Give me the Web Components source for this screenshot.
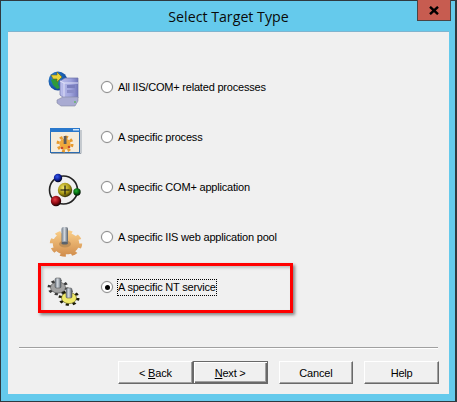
<!doctype html>
<html><head><meta charset="utf-8">
<style>
html,body{margin:0;padding:0;background:#65caec}
body{width:457px;height:402px;overflow:hidden;font-family:"Liberation Sans",Arial,sans-serif;font-size:11px;color:#000}
</style></head><body>
<x-window heading="Select Target Type">
  <x-option label="All IIS/COM+ related processes">
    <svg slot="icon" width="40" height="40" viewBox="0 0 40 40">
      <defs>
        <radialGradient id="g1" cx=".35" cy=".35" r=".8"><stop offset="0" stop-color="#2f8fe0"/><stop offset="1" stop-color="#0a3586"/></radialGradient>
        <linearGradient id="s1" x1="0" x2="1" y1="0" y2="0"><stop offset="0" stop-color="#bcbfec"/><stop offset=".6" stop-color="#9ea2dc"/><stop offset="1" stop-color="#7478bc"/></linearGradient>
      </defs>
      <circle cx="12" cy="14" r="9.5" fill="url(#g1)"/>
      <path d="M5 13l5-2 3 2-1 4 2 4-3 1-4-4z" fill="#2f9a3a"/>
      <path d="M5 8h6V5l5 5-5 5v-3H7z" fill="#e9d43a" stroke="#6e6314" stroke-width=".6"/>
      <path d="M14 14l5-3h13v20H18l-4-3z" fill="url(#s1)" stroke="#6f73aa" stroke-width=".7"/>
      <path d="M14 14l4 2h14" fill="none" stroke="#e4e5fb"/>
      <path d="M18 16v15" stroke="#e0e1f8"/>
      <rect x="21" y="18" width="8" height="3" fill="#7b7fbd"/><rect x="21" y="23" width="8" height="3" fill="#8a8dc8"/>
      <path d="M11 33l6-3h15v4l-3 5H15l-4-3z" fill="#a9abd2" stroke="#8487a3" stroke-width=".6"/>
      <circle cx="29" cy="35" r=".9" fill="#5cb85c"/>
    </svg>
  </x-option>
  <x-option label="A specific process">
    <svg slot="icon" width="40" height="40" viewBox="0 0 40 40">
      <rect x="4.5" y="11.5" width="29" height="24" fill="#f5ecdc" stroke="#2d6cb0"/>
      <rect x="4" y="11" width="30" height="4" fill="#2a78cc"/>
      <rect x="27" y="12" width="6" height="1.5" fill="#cfe4f7"/>
      <path d="M5 36.5h30V13" fill="none" stroke="#9aa3ad"/>
      <circle cx="19" cy="27" r="7" fill="none" stroke="#e89a2d" stroke-width="3" stroke-dasharray="2.8 2.7"/>
      <circle cx="19" cy="27" r="5.5" fill="#f0a93b"/>
      <circle cx="16" cy="31" r="1.3" fill="#c9472b"/><circle cx="23" cy="30" r="1.3" fill="#c9472b"/>
      <rect x="17.7" y="19" width="2.8" height="8" fill="#5d5d5d"/>
    </svg>
  </x-option>
  <x-option label="A specific COM+ application">
    <svg slot="icon" width="40" height="40" viewBox="0 0 40 40">
      <defs>
        <radialGradient id="by" cx=".4" cy=".35" r=".7"><stop offset="0" stop-color="#f4e96a"/><stop offset=".6" stop-color="#a3920f"/><stop offset="1" stop-color="#1c1903"/></radialGradient>
        <radialGradient id="bb" cx=".4" cy=".35" r=".7"><stop offset="0" stop-color="#3358f0"/><stop offset=".55" stop-color="#0f1f94"/><stop offset="1" stop-color="#000"/></radialGradient>
        <radialGradient id="br" cx=".4" cy=".35" r=".7"><stop offset="0" stop-color="#e83a44"/><stop offset=".55" stop-color="#8f0a12"/><stop offset="1" stop-color="#000"/></radialGradient>
        <radialGradient id="bg" cx=".4" cy=".35" r=".7"><stop offset="0" stop-color="#25b533"/><stop offset=".5" stop-color="#066a12"/><stop offset="1" stop-color="#000"/></radialGradient>
      </defs>
      <circle cx="17.5" cy="23" r="14" fill="none" stroke="#222" stroke-width="1.6"/>
      <circle cx="12" cy="11" r="4.2" fill="url(#bb)"/>
      <circle cx="10" cy="34" r="5.2" fill="url(#br)"/>
      <circle cx="31" cy="25" r="3.7" fill="url(#bg)"/>
      <circle cx="19" cy="23" r="7.2" fill="url(#by)"/>
      <path d="M19 18.5v9M14.5 23h9" stroke="#111" stroke-width="1.2"/>
    </svg>
  </x-option>
  <x-option label="A specific IIS web application pool">
    <svg slot="icon" width="40" height="40" viewBox="0 0 40 40">
      <defs><linearGradient id="cy" x1="0" x2="1" y1="0" y2="0"><stop offset="0" stop-color="#6f7a86"/><stop offset=".45" stop-color="#d3d8de"/><stop offset="1" stop-color="#59626c"/></linearGradient>
      <linearGradient id="go" gradientUnits="userSpaceOnUse" x1="0" x2="0" y1="-16" y2="16"><stop offset="0" stop-color="#fbd08a"/><stop offset="1" stop-color="#d08c4c"/></linearGradient></defs>
      <g transform="translate(20 26.5) scale(1 .82)">
        <circle r="14" fill="none" stroke="url(#go)" stroke-width="4.4" stroke-dasharray="5.5 5.5"/>
        <circle r="13.2" fill="url(#go)"/>
      </g>
      <ellipse cx="19" cy="27" rx="6" ry="3.5" fill="#c09058"/>
      <rect x="15.5" y="10" width="6.5" height="16" rx="2" fill="url(#cy)"/>
      <ellipse cx="18.7" cy="26" rx="3.3" ry="1.6" fill="#59626c"/>
    </svg>
  </x-option>
  <x-option label="A specific NT service" checked>
    <svg slot="icon" width="40" height="40" viewBox="0 0 40 40">
      <g transform="translate(12 20.5) scale(1 .75)">
        <circle r="8.5" fill="none" stroke="#3a3a3a" stroke-width="4" stroke-dasharray="3 3.67"/>
        <circle r="7.5" fill="#a2a2a2" stroke="#4a4a4a" stroke-width=".7"/>
      </g>
      <rect x="9" y="11" width="6" height="10" rx="1.5" fill="url(#cy)" stroke="#444" stroke-width=".5"/>
      <g transform="translate(23 31) scale(1 .75)">
        <circle r="8.5" fill="none" stroke="#1a1a08" stroke-width="4" stroke-dasharray="3 3.67"/>
        <circle r="7.5" fill="#efe96a" stroke="#5a5614" stroke-width=".7"/>
      </g>
      <rect x="20" y="21" width="6" height="10" rx="1.5" fill="url(#cy)" stroke="#444" stroke-width=".5"/>
    </svg>
  </x-option>
</x-window>
<script>
function def(name, html, init){
  const t=document.createElement('template'); t.innerHTML=html;
  customElements.define(name, class extends HTMLElement{
    constructor(){super(); this.attachShadow({mode:'open'}).appendChild(t.content.cloneNode(true));}
    connectedCallback(){ if(init) init(this, this.shadowRoot); }
  });
}
def('x-button',`<style>
:host{display:block;width:75px;height:23px;box-sizing:border-box;background:#f0f0f0;
border:1px solid;border-color:#fff #696969 #696969 #fff;box-shadow:inset -1px -1px 0 #a0a0a0;
font:11px "Liberation Sans",Arial,sans-serif;letter-spacing:-.2px;color:#000}
:host([default]){border:1px solid #696969;box-shadow:inset 1px 1px 0 #fff,inset -1px -1px 0 #696969,inset -2px -2px 0 #a0a0a0}
div{display:flex;height:100%;align-items:center;justify-content:center;white-space:pre}
</style><div><slot></slot></div>`);
def('x-titlebar',`<style>
:host{display:flex;align-items:center;justify-content:center;height:30px;box-sizing:border-box;position:relative;
font:14.2px "Open Sans","Noto Sans",sans-serif;color:#0a0a0a}
span.close{position:absolute;top:-1px;right:-2px;width:34px;height:21px;box-sizing:border-box;background:#c75c50;border:1px solid #4a4444;border-top:none;
display:flex;align-items:center;justify-content:center}
</style><slot></slot><span class="close"><svg width="10" height="9" viewBox="0 0 10 9"><path d="M1 .8l8 7.4M9 .8L1 8.2" stroke="#000" stroke-width="2.4"/></svg></span>`);
def('x-option',`<style>
:host{display:flex;align-items:center;height:50px;padding-left:38px;letter-spacing:-.2px}
.ic{width:40px;height:40px;margin-right:15px;flex:none}
.r{width:12px;height:12px;box-sizing:border-box;border-radius:50%;background:#fff;border:1px solid #8a8a8a;box-shadow:0 0 0 .5px #dcdcdc;flex:none;margin-right:4px;display:flex;align-items:center;justify-content:center}
.r i{display:none;width:5px;height:5px;border-radius:50%;background:#000}
.l{border:1px solid transparent;padding:1px 0;line-height:13px;white-space:nowrap}
:host([checked]) .r i{display:block}
:host([checked]) .l{border:1px dotted #000}
</style><div class="ic"><slot name="icon"></slot></div><span class="r"><i></i></span><span class="l"></span>`,
(el,s)=>{s.querySelector('.l').textContent=el.getAttribute('label');});
def('x-window',`<style>
:host{display:block;width:457px;height:402px;box-sizing:border-box;border:1px solid #2f3a40;border-width:1px 2px 1px 1px;background:#65caec;padding:0 6px 7px 7px}
.panel{position:relative;height:363px;box-sizing:border-box;background:#f0f0f0;border-top:1px solid #7fb4cf;padding-top:30px;display:flex;flex-direction:column}
.hl{position:absolute;left:30px;top:231px;width:255px;height:50px;box-sizing:border-box;border:3px solid #f00;box-shadow:2px 2px 3px rgba(0,0,0,.45),inset 2px 2px 3px rgba(0,0,0,.2)}
.sep{height:1px;background:#a0a0a0;border-bottom:1px solid #fff;margin:auto 11px 0 11px}
.foot{display:flex;padding:12px 10px 10px 110px}
.gap{display:block;width:11px;flex:none}
</style><x-titlebar id="t"></x-titlebar><div class="panel"><slot></slot><div class="hl"></div><div class="sep"></div>
<div class="foot"><x-button><span>&lt; <u>B</u>ack</span></x-button><x-button default><span><u>N</u>ext &gt;</span></x-button><span class="gap"></span><x-button>Cancel</x-button><span class="gap"></span><x-button>Help</x-button></div></div>`,
(el,s)=>{s.getElementById('t').textContent=el.getAttribute('heading');});
</script>
</body></html>
